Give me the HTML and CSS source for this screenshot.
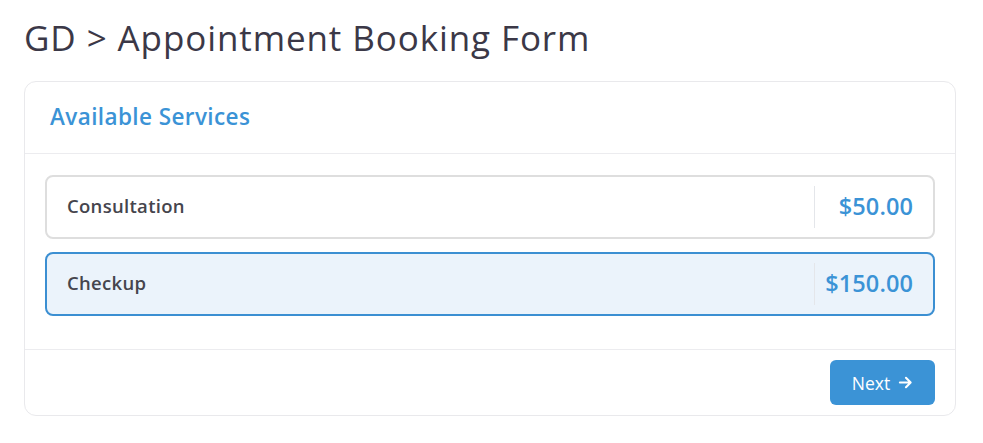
FILE: index.html
```html
<!DOCTYPE html>
<html>
<head>
<meta charset="utf-8">
<link rel="stylesheet" href="styles.css">
</head>
<body>
<div class="page">
  <h1 class="title">GD &gt; Appointment Booking Form</h1>
  <div class="card">
    <div class="card-header">Available Services</div>
    <div class="card-body">
      <div class="service">
        <span class="service-name">Consultation</span>
        <span class="service-price">$50.00</span>
      </div>
      <div class="service selected">
        <span class="service-name">Checkup</span>
        <span class="service-price">$150.00</span>
      </div>
    </div>
    <div class="card-footer">
      <button class="btn">Next
        <svg class="arrow" viewBox="0 0 16 16" width="15" height="15"><path d="M2 8h11M8.5 3l5 5-5 5" fill="none" stroke="#fff" stroke-width="2.2" stroke-linecap="round" stroke-linejoin="round"/></svg>
      </button>
    </div>
  </div>
</div>
</body>
</html>
```
FILE: styles.css
```css
* { box-sizing: border-box; }
body {
  margin: 0;
  background: #fff;
  font-family: "Open Sans", "DejaVu Sans", sans-serif;
  color: #3d3a48;
}
.page {
  padding: 14px 27px 0 24px;
}
.title {
  margin: 0 0 19px 0;
  font-weight: 400;
  font-size: 35px;
  line-height: 48px;
  color: #3b3847;
  letter-spacing: 0.9px;
}
.card {
  border: 1px solid #e9e9ec;
  border-radius: 12px;
  width: 932px;
  background: #fff;
}
.card-header {
  height: 72px;
  padding: 0 25px 2px 25px;
  display: flex;
  align-items: center;
  border-bottom: 1px solid #ececef;
  color: #3b93d6;
  font-size: 22.5px;
  font-weight: 600;
  letter-spacing: 0.4px;
}
.card-body {
  padding: 21px 20px 33px 20px;
  display: flex;
  flex-direction: column;
  gap: 13px;
  border-bottom: 1px solid #ececef;
}
.service {
  height: 64px;
  border: 2px solid #dedede;
  border-radius: 8px;
  display: flex;
  align-items: center;
  justify-content: space-between;
  padding: 0 20px;
}
.service.selected {
  border-color: #3b8fd2;
  background: #ebf3fb;
}
.service-name {
  font-size: 18.5px;
  font-weight: 600;
  color: #45454d;
  letter-spacing: 0.3px;
  padding-bottom: 3px;
}
.service-price {
  align-self: stretch;
  width: 99px;
  display: flex;
  align-items: center;
  justify-content: flex-end;
  border-left: 1px solid #e4e6ea;
  margin: 9px 0;
  font-size: 23.5px;
  font-weight: 600;
  color: #3b93d6;
  letter-spacing: 0.1px;
  padding-bottom: 3px;
}
.card-footer {
  display: flex;
  justify-content: flex-end;
  padding: 10px 20px 10px 20px;
}
.btn {
  width: 105px;
  height: 45px;
  background: #3b93d6;
  border: none;
  border-radius: 6px;
  color: #fff;
  font-family: inherit;
  font-size: 17.5px;
  display: flex;
  align-items: center;
  justify-content: center;
  gap: 8px;
  padding: 0;
}
.arrow { display: block; }
```
